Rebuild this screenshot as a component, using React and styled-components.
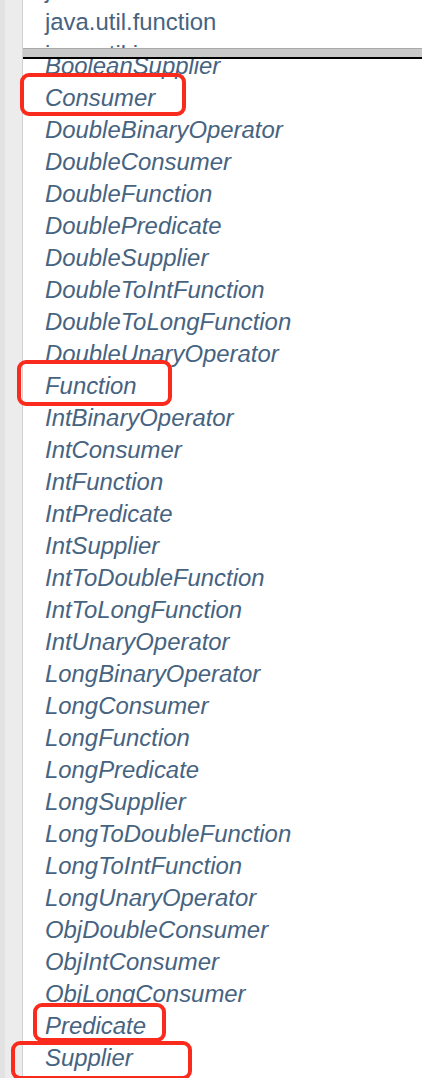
import styled, { createGlobalStyle } from 'styled-components';

const GlobalStyle = createGlobalStyle`
  html, body {
    margin: 0;
    padding: 0;
    background: #fff;
    overflow: hidden;
  }
`;

const Frame = styled.div`
  position: relative;
  display: flex;
  width: 422px;
  height: 1078px;
  overflow: hidden;
  font-family: 'Liberation Sans', Arial, Helvetica, sans-serif;
`;

const Gutter = styled.div`
  flex: 0 0 22px;
  background: linear-gradient(to right, #e2e2e2 0 5px, #ececec 5px 100%);
  border-right: 1px solid #d2d2d2;
`;

const Main = styled.div`
  flex: 1;
  display: flex;
  flex-direction: column;
  min-width: 0;
`;

const Pane = styled.div`
  flex: ${({ $height }) => ($height ? `0 0 ${$height}` : '1')};
  overflow: hidden;
  background: #fff;
`;

const List = styled.ul`
  list-style: none;
  margin: ${({ $offset }) => $offset}px 0 0;
  padding: 0 0 0 22px;
`;

const Item = styled.li`
  height: 32px;
  line-height: 32px;
  font-size: 23.9px;
  color: #46637f;
  font-style: ${({ $italic }) => ($italic ? 'italic' : 'normal')};
  white-space: nowrap;
`;

const Splitter = styled.div`
  flex: 0 0 auto;
  height: 8px;
  background: #c9c9c9;
  border-top: 1px solid #a9a9a9;
  border-bottom: 2px solid #000;
`;

const Mark = styled.div`
  position: absolute;
  box-sizing: border-box;
  border: 4px solid #fa2a1c;
  border-radius: 9px;
  left: ${({ $x }) => $x}px;
  top: ${({ $y }) => $y}px;
  width: ${({ $w }) => $w}px;
  height: ${({ $h }) => $h}px;
`;

const packages = ['java.util.concurrent.locks', 'java.util.function', 'java.util.jar'];

const classes = [
  'BooleanSupplier',
  'Consumer',
  'DoubleBinaryOperator',
  'DoubleConsumer',
  'DoubleFunction',
  'DoublePredicate',
  'DoubleSupplier',
  'DoubleToIntFunction',
  'DoubleToLongFunction',
  'DoubleUnaryOperator',
  'Function',
  'IntBinaryOperator',
  'IntConsumer',
  'IntFunction',
  'IntPredicate',
  'IntSupplier',
  'IntToDoubleFunction',
  'IntToLongFunction',
  'IntUnaryOperator',
  'LongBinaryOperator',
  'LongConsumer',
  'LongFunction',
  'LongPredicate',
  'LongSupplier',
  'LongToDoubleFunction',
  'LongToIntFunction',
  'LongUnaryOperator',
  'ObjDoubleConsumer',
  'ObjIntConsumer',
  'ObjLongConsumer',
  'Predicate',
  'Supplier',
  'ToDoubleBiFunction',
];

// red annotation boxes drawn over the list
const marks = [
  { x: 20, y: 73, w: 166, h: 43 },
  { x: 17, y: 360, w: 155, h: 46 },
  { x: 33, y: 1003, w: 133, h: 39 },
  { x: 11, y: 1041, w: 181, h: 39 },
];

function App() {
  return (
    <>
      <GlobalStyle />
      <Frame>
        <Gutter />
        <Main>
          <Pane $height="48px">
            <List $offset={-26}>
              {packages.map((p) => (
                <Item key={p}>{p}</Item>
              ))}
            </List>
          </Pane>
          <Splitter />
          <Pane>
            <List $offset={-9}>
              {classes.map((c) => (
                <Item key={c} $italic>
                  {c}
                </Item>
              ))}
            </List>
          </Pane>
        </Main>
        {marks.map((m, i) => (
          <Mark key={i} $x={m.x} $y={m.y} $w={m.w} $h={m.h} />
        ))}
      </Frame>
    </>
  );
}

export default App;
